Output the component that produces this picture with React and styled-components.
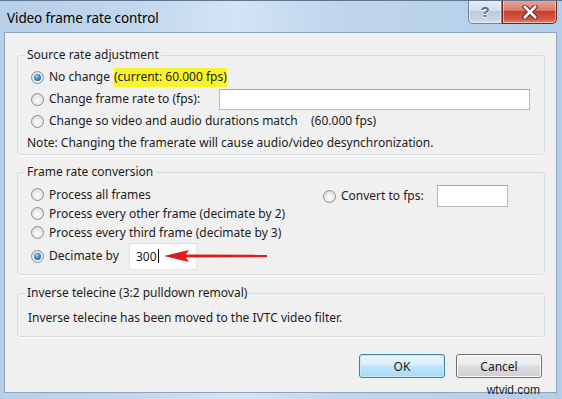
import React from 'react';
import styled, { createGlobalStyle } from 'styled-components';

const Global = createGlobalStyle`
  html, body { margin: 0; padding: 0; background: #b9d1ea; }
  body { font-family: "Noto Sans", "Open Sans", sans-serif; }
  * { box-sizing: border-box; }
`;

const Window = styled.div`
  position: relative;
  width: 562px;
  height: 399px;
  display: flex;
  flex-direction: column;
  background: linear-gradient(90deg, #b7cfe9 0%, #c3d8ee 25%, #d3e4f5 42%, #c0d6ed 60%, #b4cde8 100%);
  border-top: 1px solid #607690;
  overflow: hidden;
`;

const TitleBar = styled.div`
  height: 31px;
  flex: none;
  display: flex;
  justify-content: space-between;
  align-items: flex-start;
`;

const Title = styled.div`
  padding: 7px 0 0 7px;
  font-size: 13.5px;
  line-height: 20px;
  color: #000;
  letter-spacing: -0.1px;
`;

const Captions = styled.div`
  display: flex;
  margin-right: 5px;
  margin-top: -1px;
`;

const CaptionButton = styled.div`
  width: ${p => p.$w}px;
  height: 24px;
  display: flex;
  align-items: center;
  justify-content: center;
  border: 1px solid ${p => (p.$close ? '#6b2b24' : '#6f8298')};
  border-top: none;
  border-radius: ${p => (p.$close ? '0 0 5px 0' : '0 0 0 5px')};
  background: ${p =>
    p.$close
      ? 'linear-gradient(180deg, #e9a99b 0%, #dc7a68 45%, #c7402d 50%, #d35a45 85%, #e48c70 100%)'
      : 'linear-gradient(180deg, #e6eef6 0%, #d3dfeb 45%, #bccbdb 50%, #c8d6e4 85%, #d7e3ee 100%)'};
  box-shadow: inset 0 0 0 1px rgba(255,255,255,0.45);
  font-family: "Liberation Sans", sans-serif;
  font-weight: bold;
  font-size: 15px;
  color: #596c82;
  text-shadow: 0 1px 0 #fff;
`;

const Client = styled.div`
  flex: 1;
  margin: 0 5px 6px 4px;
  background: #f0f0f0;
  border: 1px solid #8fa4bb;
  padding: 0 11px 0 12px;
  display: flex;
  flex-direction: column;
  font-size: 12px;
  color: #1b1b1b;
`;

const Group = styled.fieldset`
  margin: ${p => p.$top}px 0 0 0;
  padding: ${p => p.$pt}px 13px ${p => p.$pb}px ${p => p.$pl}px;
  border: 1px solid #d5dce2;
  border-radius: 3px;
  box-shadow: 0 1px 0 #fbfbfb;
  min-width: 0;
`;

const Legend = styled.legend`
  margin-left: ${p => p.$ml}px;
  padding: 0 2px;
  font-size: 12px;
  line-height: 16px;
  color: #1b1b1b;
`;

const Row = styled.div`
  position: relative;
  display: flex;
  align-items: center;
  height: ${p => p.$h || 22}px;
`;

const Choice = styled.label`
  display: flex;
  align-items: center;
  flex: none;
  width: ${p => (p.$w ? `${p.$w}px` : 'auto')};
  white-space: nowrap;
  line-height: 16px;
`;

const Radio = styled.span`
  width: 13px;
  height: 13px;
  flex: none;
  margin-right: 5px;
  border-radius: 50%;
  border: 1px solid #8d9093;
  background: radial-gradient(circle at 50% 60%, #ffffff 0%, #ececec 45%, #cfcfcf 100%);
  display: flex;
  align-items: center;
  justify-content: center;
  &::after {
    content: '';
    display: ${p => (p.$on ? 'block' : 'none')};
    width: 7px;
    height: 7px;
    border-radius: 50%;
    background: radial-gradient(circle at 40% 35%, #9fd8ff 0%, #3d8fd0 40%, #154a7d 100%);
  }
`;

const Highlight = styled.span`
  background: #f7f42a;
  padding: 1px 0 2px;
  margin-left: 4px;
`;

const TextBox = styled.div`
  width: ${p => p.$w}px;
  height: ${p => p.$h}px;
  flex: none;
  background: #fff;
  border: 1px solid ${p => (p.$faint ? '#e4e4e4' : '#b5b9be')};
  border-top-color: ${p => (p.$faint ? '#dedede' : '#a4a9af')};
  display: flex;
  align-items: center;
  padding-left: 6px;
  font-size: 12px;
`;

const Caret = styled.span`
  display: inline-block;
  width: 1px;
  height: 14px;
  background: #000;
  margin-left: 1px;
`;

const Plain = styled.span`
  white-space: nowrap;
  line-height: 16px;
  margin-left: ${p => p.$ml || 0}px;
`;

const Columns = styled.div`
  display: flex;
  align-items: flex-start;
`;

const Column = styled.div`
  display: flex;
  flex-direction: column;
  width: ${p => (p.$w ? `${p.$w}px` : 'auto')};
  flex: none;
`;

const Arrow = styled.svg`
  position: absolute;
  left: 132px;
  top: 6px;
  pointer-events: none;
`;

const Buttons = styled.div`
  display: flex;
  justify-content: flex-end;
  gap: 11px;
  margin: 17px 3px 0 0;
`;

const Button = styled.button`
  width: 86px;
  height: 24px;
  padding: 0;
  border-radius: 3px;
  font-family: inherit;
  font-size: 12px;
  color: #1b1b1b;
  border: 1px solid ${p => (p.$default ? '#3c7fb1' : '#707070')};
  background: ${p =>
    p.$default
      ? 'linear-gradient(180deg, #eaf6fd 0%, #d9f0fc 45%, #bee6fd 50%, #a7d9f5 100%)'
      : 'linear-gradient(180deg, #f2f2f2 0%, #ebebeb 45%, #dddddd 50%, #cfcfcf 100%)'};
  box-shadow: inset 0 0 0 1px ${p => (p.$default ? '#c5eafd' : '#fcfcfc')};
`;

const Watermark = styled.div`
  position: absolute;
  right: 21px;
  bottom: 2px;
  font-family: "Liberation Sans", Arial, sans-serif;
  font-size: 12px;
  color: #1e1e1e;
  padding: 0 1px;
  line-height: 14px;
`;

const CloseIcon = () => (
  <svg width="16" height="14" viewBox="0 0 16 14">
    <path d="M3 2 L13 12 M13 2 L3 12" stroke="#5a1d16" strokeWidth="4.6" strokeLinecap="square" />
    <path d="M3 2 L13 12 M13 2 L3 12" stroke="#ffffff" strokeWidth="2.8" strokeLinecap="square" />
  </svg>
);

export default function App() {
  return (
    <>
      <Global />
      <Window>
        <TitleBar>
          <Title>Video frame rate control</Title>
          <Captions>
            <CaptionButton $w={34}>?</CaptionButton>
            <CaptionButton $w={55} $close>
              <CloseIcon />
            </CaptionButton>
          </Captions>
        </TitleBar>
        <Client>
          <Group $top={14} $pt={3} $pb={0} $pl={13}>
            <Legend $ml={-6}>Source rate adjustment</Legend>
            <Row>
              <Choice>
                <Radio $on />
                No change
                <Highlight>(current: 60.000 fps)</Highlight>
              </Choice>
            </Row>
            <Row>
              <Choice $w={188}>
                <Radio />
                Change frame rate to (fps):
              </Choice>
              <TextBox $w={311} $h={21} />
            </Row>
            <Row>
              <Choice $w={280}>
                <Radio />
                Change so video and audio durations match
              </Choice>
              <Plain>(60.000 fps)</Plain>
            </Row>
            <Row>
              <Plain $ml={-4}>
                Note: Changing the framerate will cause audio/video desynchronization.
              </Plain>
            </Row>
          </Group>

          <Group $top={9} $pt={5} $pb={4} $pl={13}>
            <Legend $ml={-6}>Frame rate conversion</Legend>
            <Columns>
              <Column $w={292}>
                <Row $h={19}>
                  <Choice>
                    <Radio />
                    Process all frames
                  </Choice>
                </Row>
                <Row $h={19}>
                  <Choice>
                    <Radio />
                    Process every other frame (decimate by 2)
                  </Choice>
                </Row>
                <Row $h={19}>
                  <Choice>
                    <Radio />
                    Process every third frame (decimate by 3)
                  </Choice>
                </Row>
                <Row $h={28}>
                  <Choice $w={98}>
                    <Radio $on />
                    Decimate by
                  </Choice>
                  <TextBox $w={68} $h={27} $faint>
                    300<Caret />
                  </TextBox>
                  <Arrow width="106" height="16" viewBox="0 0 106 16">
                    <path d="M22 6.5 L104 6.8 L104 9.2 L22 9.5 Z" fill="#d71f1f" />
                    <path d="M1 8 L26 2 L22 8 L26 14 Z" fill="#e01b1b" />
                  </Arrow>
                </Row>
              </Column>
              <Column>
                <Row>
                  <Choice $w={114}>
                    <Radio />
                    Convert to fps:
                  </Choice>
                  <TextBox $w={71} $h={22} />
                </Row>
              </Column>
            </Columns>
          </Group>

          <Group $top={10} $pt={8} $pb={10} $pl={10}>
            <Legend $ml={-3}>Inverse telecine (3:2 pulldown removal)</Legend>
            <Plain>Inverse telecine has been moved to the IVTC video filter.</Plain>
          </Group>

          <Buttons>
            <Button $default>OK</Button>
            <Button>Cancel</Button>
          </Buttons>
        </Client>
        <Watermark>wtvid.com</Watermark>
      </Window>
    </>
  );
}
